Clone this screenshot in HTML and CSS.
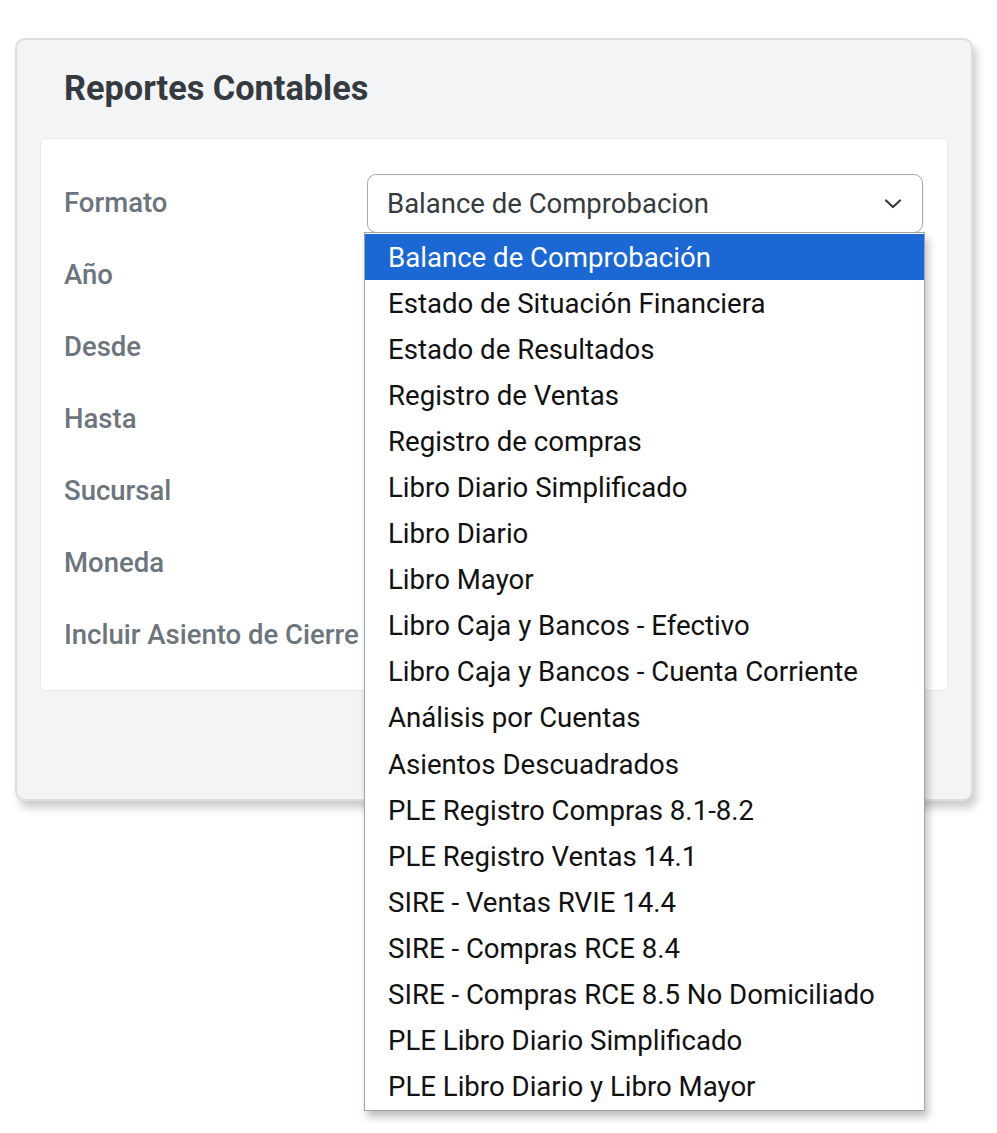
FILE: index.html
```html
<!DOCTYPE html>
<html lang="es">
<head>
<meta charset="utf-8">
<title>Reportes Contables</title>
<link rel="stylesheet" href="styles.css">
</head>
<body>
<div class="outer">
  <h1 class="title">Reportes Contables</h1>
  <div class="inner">
    <div class="row">
      <div class="label">Formato</div>
      <div class="field">
        <div class="select">
          <span>Balance de Comprobacion</span>
          <svg class="chev" width="18" height="12" viewBox="0 0 18 12"><path d="M2 2.5 L9 9 L16 2.5" fill="none" stroke="#343a40" stroke-width="2.2" stroke-linecap="round" stroke-linejoin="round"/></svg>
        </div>
        <ul class="menu">
          <li class="active">Balance de Comprobación</li>
          <li>Estado de Situación Financiera</li>
          <li>Estado de Resultados</li>
          <li>Registro de Ventas</li>
          <li>Registro de compras</li>
          <li>Libro Diario Simplificado</li>
          <li>Libro Diario</li>
          <li>Libro Mayor</li>
          <li>Libro Caja y Bancos - Efectivo</li>
          <li>Libro Caja y Bancos - Cuenta Corriente</li>
          <li>Análisis por Cuentas</li>
          <li>Asientos Descuadrados</li>
          <li>PLE Registro Compras 8.1-8.2</li>
          <li>PLE Registro Ventas 14.1</li>
          <li>SIRE - Ventas RVIE 14.4</li>
          <li>SIRE - Compras RCE 8.4</li>
          <li>SIRE - Compras RCE 8.5 No Domiciliado</li>
          <li>PLE Libro Diario Simplificado</li>
          <li>PLE Libro Diario y Libro Mayor</li>
        </ul>
      </div>
    </div>
    <div class="row"><div class="label">Año</div></div>
    <div class="row"><div class="label">Desde</div></div>
    <div class="row"><div class="label">Hasta</div></div>
    <div class="row"><div class="label">Sucursal</div></div>
    <div class="row"><div class="label">Moneda</div></div>
    <div class="row"><div class="label">Incluir Asiento de Cierre</div></div>
  </div>
</div>
</body>
</html>
```

FILE: styles.css
```css
* { box-sizing: border-box; }
html, body { margin: 0; padding: 0; background: #ffffff; }
body {
  font-family: Roboto, "Liberation Sans", Arial, sans-serif;
  width: 997px;
  height: 1133px;
  overflow: hidden;
}
.outer {
  margin: 38px 0 0 15px;
  width: 958px;
  height: 763px;
  background: #f3f4f6;
  border: 2px solid #dcdee0;
  border-radius: 10px;
  box-shadow: 4px 7px 9px rgba(0,0,0,0.2);
  padding: 0 23px;
}
.title {
  margin: 0;
  padding: 28px 0 0 24px;
  height: 98px;
  font-size: 34.3px;
  font-weight: 700;
  color: #343a40;
  line-height: 40px;
}
.inner {
  background: #ffffff;
  border: 1px solid #e6e8eb;
  border-radius: 5px;
  height: 553px;
  padding: 28px 24px 0 23px;
}
.row {
  height: 72px;
  display: flex;
  align-items: center;
}
.label {
  width: 303px;
  flex: none;
  font-size: 27.5px;
  font-weight: 500;
  color: #6c757d;
  white-space: nowrap;
  position: relative;
  top: -1px;
}
.field {
  flex: 1;
  position: relative;
}
.select {
  height: 59px;
  border: 1.5px solid #a2aab1;
  border-radius: 9px;
  display: flex;
  align-items: center;
  justify-content: space-between;
  padding: 0 20px 0 19px;
  font-size: 27.5px;
  color: #343a40;
  background: #fff;
}
.chev { display: block; margin-top: 2px; }
.menu {
  position: absolute;
  top: 58px;
  left: -3px;
  width: 561px;
  margin: 0;
  padding: 1px 0 1px 0;
  list-style: none;
  background: #fff;
  border: 1.5px solid #9aa4ac;
  box-shadow: 3px 6px 8px rgba(0,0,0,0.25);
  z-index: 10;
}
.menu li {
  height: 46.1px;
  line-height: 48px;
  padding-left: 23px;
  font-size: 27.6px;
  color: #111111;
  white-space: nowrap;
  overflow: hidden;
}
.menu li.active {
  background: #1b68d4;
  color: #ffffff;
}
```
